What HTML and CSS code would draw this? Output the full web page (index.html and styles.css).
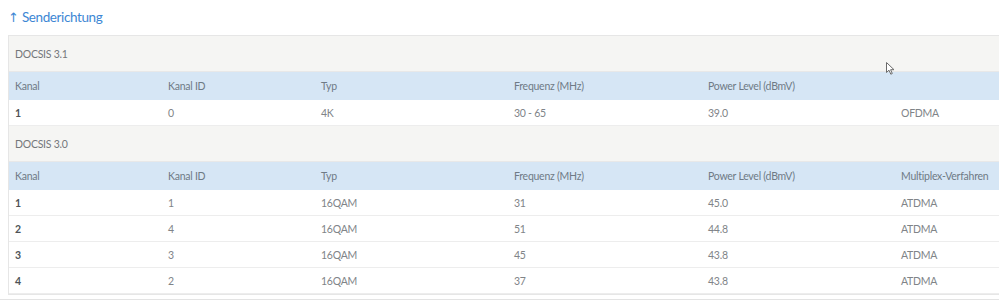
FILE: index.html
```html
<!DOCTYPE html>
<html lang="de">
<head>
<meta charset="utf-8">
<title>Senderichtung</title>
<link rel="stylesheet" href="styles.css">
</head>
<body>
<h2 class="title"><span class="arrow">↑</span> Senderichtung</h2>
<div class="panel">
  <table class="grid">
    <colgroup>
      <col class="c1"><col class="c2"><col class="c3"><col class="c4"><col class="c5"><col class="c6">
    </colgroup>
    <tbody>
      <tr class="section"><td colspan="6">DOCSIS 3.1</td></tr>
      <tr class="head"><td>Kanal</td><td>Kanal ID</td><td>Typ</td><td>Frequenz (MHz)</td><td>Power Level (dBmV)</td><td></td></tr>
      <tr class="row"><td class="first">1</td><td>0</td><td>4K</td><td>30 - 65</td><td>39.0</td><td>OFDMA</td></tr>
      <tr class="section"><td colspan="6">DOCSIS 3.0</td></tr>
      <tr class="head"><td>Kanal</td><td>Kanal ID</td><td>Typ</td><td>Frequenz (MHz)</td><td>Power Level (dBmV)</td><td>Multiplex-Verfahren</td></tr>
      <tr class="row"><td class="first">1</td><td>1</td><td>16QAM</td><td>31</td><td>45.0</td><td>ATDMA</td></tr>
      <tr class="row"><td class="first">2</td><td>4</td><td>16QAM</td><td>51</td><td>44.8</td><td>ATDMA</td></tr>
      <tr class="row"><td class="first">3</td><td>3</td><td>16QAM</td><td>45</td><td>43.8</td><td>ATDMA</td></tr>
      <tr class="row"><td class="first">4</td><td>2</td><td>16QAM</td><td>37</td><td>43.8</td><td>ATDMA</td></tr>
    </tbody>
  </table>
  <svg class="cursor" width="9" height="13" viewBox="0 0 9 13" aria-hidden="true">
    <path d="M0.5 0.5 L0.5 10.5 L3 8.2 L4.8 12.2 L6.3 11.5 L4.6 7.7 L8 7.7 Z" fill="#ffffff" stroke="#6a6a6a" stroke-width="1" stroke-linejoin="round"/>
  </svg>
</div>
<div class="rule"></div>
</body>
</html>
```
FILE: styles.css
```css
html, body {
  margin: 0;
  padding: 0;
  overflow: hidden;
  background: #ffffff;
}
body {
  font-family: "Source Sans Pro", Lato, "Open Sans", sans-serif;
  color: #6f7378;
  width: 999px;
}
.title {
  margin: 0;
  padding: 8px 0 0 8px;
  height: 35px;
  box-sizing: border-box;
  font-size: 13.5px;
  letter-spacing: -0.4px;
  font-weight: 400;
  color: #3d87d4;
  line-height: 18px;
}
.arrow {
  font-family: "DejaVu Sans", sans-serif;
  font-size: 13px;
  letter-spacing: 0;
}
.panel {
  position: relative;
  margin-left: 8px;
  width: 1100px;
  border: 1px solid #e6e6e6;
}
.grid {
  border-collapse: collapse;
  table-layout: fixed;
  width: 100%;
  font-size: 10.5px;
  letter-spacing: -0.25px;
}
.c1, .c2 { width: 153px; }
.c3 { width: 193px; }
.c4 { width: 194px; }
.c5 { width: 193px; }
.grid td {
  padding: 0 0 0 6px;
  white-space: nowrap;
  vertical-align: middle;
}
.section td {
  background: #f5f5f3;
  height: 35px;
  color: #74777a;
  border-bottom: 1px solid #e8e8e8;
}
.head td {
  background: #d6e6f5;
  height: 28px;
  color: #6f7a85;
}
.row td {
  height: 25px;
  border-bottom: 1px solid #ededed;
  color: #808488;
}
.row td.first {
  color: #4e5358;
  font-weight: 700;
}
.cursor {
  position: absolute;
  left: 877px;
  top: 26px;
}
.rule {
  margin-top: 4px;
  height: 1px;
  background: #e3e3e3;
}
```
